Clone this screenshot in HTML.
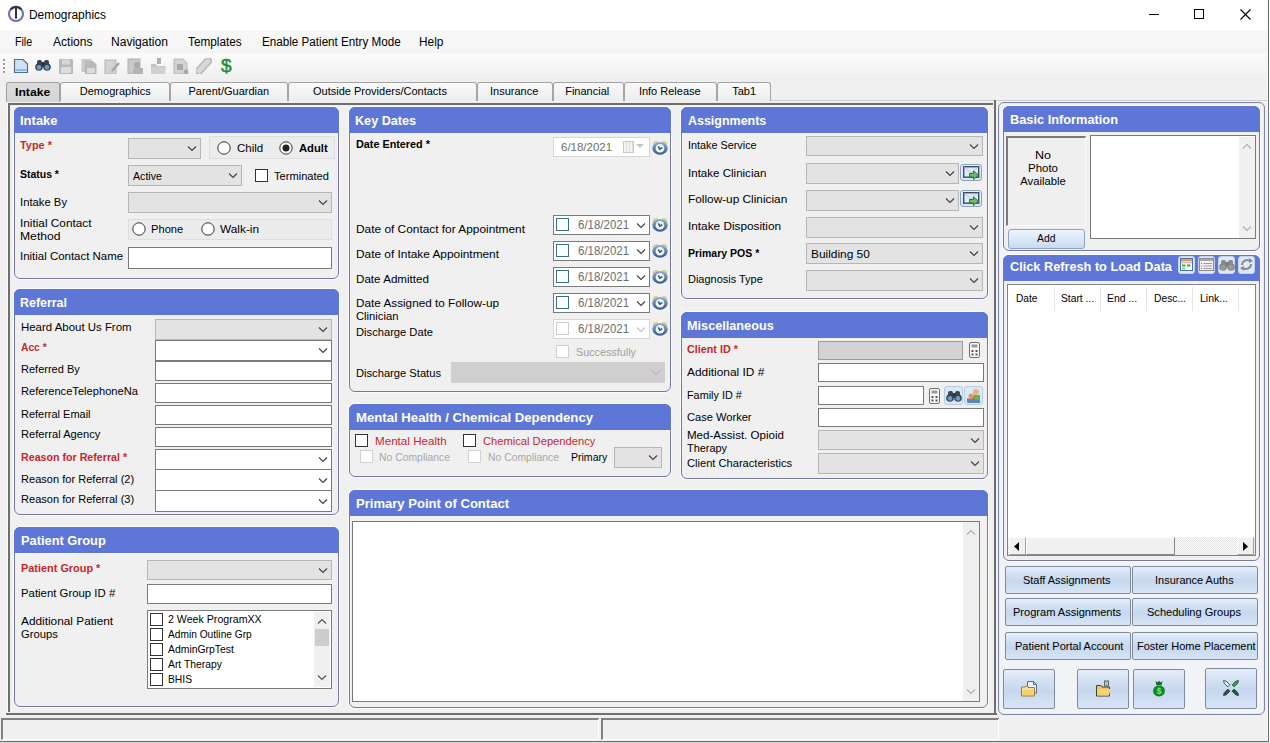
<!DOCTYPE html><html><head><meta charset="utf-8"><style>html,body{margin:0;padding:0;}body{width:1270px;height:743px;position:relative;overflow:hidden;background:#f0f0f0;font-family:"Liberation Sans", sans-serif;}div{box-sizing:content-box;}</style></head><body>
<div style="position:absolute;left:0px;top:0px;width:1270px;height:30px;background:#fff;"></div>
<svg style="position:absolute;left:7px;top:5px" width="18" height="18" viewBox="0 0 18 18"><circle cx="9" cy="9" r="7" fill="none" stroke="#6c6fc4" stroke-width="2.1"/><path d="M3.6,4.5 A7,7 0 0 1 14.4,4.5" fill="none" stroke="#2e3636" stroke-width="2.3"/><path d="M9,2.5 V13.5" stroke="#2e3636" stroke-width="2"/></svg>
<div style="position:absolute;left:29.0px;top:7.84px;font-size:12px;line-height:14px;color:#000;font-weight:normal;white-space:nowrap;transform:scaleX(0.9952);transform-origin:left top;">Demographics</div>
<div style="position:absolute;left:1149px;top:14px;width:10px;height:1px;background:#000;"></div>
<div style="position:absolute;left:1194px;top:9px;width:10px;height:10px;box-sizing:border-box;border:1px solid #000;"></div>
<svg style="position:absolute;left:1240px;top:9px" width="11" height="11"><path d="M0.5,0.5 L10.5,10.5 M10.5,0.5 L0.5,10.5" stroke="#000" stroke-width="1.1"/></svg>
<div style="position:absolute;left:1267px;top:0px;width:1px;height:743px;background:#f4f4f4;"></div>
<div style="position:absolute;left:1268px;top:0px;width:1px;height:743px;background:#6e6e6e;"></div>
<div style="position:absolute;left:1269px;top:0px;width:1px;height:743px;background:#fff;"></div>
<div style="position:absolute;left:0px;top:30px;width:1267px;height:23px;background:linear-gradient(#f8f8f8,#f5f5f5);"></div>
<div style="position:absolute;left:15.4px;top:34.84px;font-size:12px;line-height:14px;color:#000;font-weight:normal;white-space:nowrap;transform:scaleX(0.8877);transform-origin:left top;">File</div>
<div style="position:absolute;left:52.5px;top:34.84px;font-size:12px;line-height:14px;color:#000;font-weight:normal;white-space:nowrap;transform:scaleX(1.0032);transform-origin:left top;">Actions</div>
<div style="position:absolute;left:111.4px;top:34.84px;font-size:12px;line-height:14px;color:#000;font-weight:normal;white-space:nowrap;transform:scaleX(1.0044);transform-origin:left top;">Navigation</div>
<div style="position:absolute;left:188.3px;top:34.84px;font-size:12px;line-height:14px;color:#000;font-weight:normal;white-space:nowrap;transform:scaleX(0.9808);transform-origin:left top;">Templates</div>
<div style="position:absolute;left:261.5px;top:34.84px;font-size:12px;line-height:14px;color:#000;font-weight:normal;white-space:nowrap;transform:scaleX(0.9716);transform-origin:left top;">Enable Patient Entry Mode</div>
<div style="position:absolute;left:419.4px;top:34.84px;font-size:12px;line-height:14px;color:#000;font-weight:normal;white-space:nowrap;transform:scaleX(0.9868);transform-origin:left top;">Help</div>
<div style="position:absolute;left:0px;top:53px;width:1267px;height:29px;background:linear-gradient(#fbfbfb,#eeeeee);"></div>
<div style="position:absolute;left:3px;top:59px;width:2px;height:2px;background:#9a9a9a;"></div>
<div style="position:absolute;left:3px;top:63px;width:2px;height:2px;background:#9a9a9a;"></div>
<div style="position:absolute;left:3px;top:67px;width:2px;height:2px;background:#9a9a9a;"></div>
<div style="position:absolute;left:3px;top:71px;width:2px;height:2px;background:#9a9a9a;"></div>
<svg style="position:absolute;left:13px;top:58px" width="16" height="16" viewBox="0 0 16 16"><path d="M1.5,1.5 H10 L14.5,6 V14.5 H1.5 Z" fill="#cfe2f5" stroke="#5b6d80" stroke-width="1.2"/><rect x="2.2" y="11" width="11.6" height="2" fill="#7fc0ea"/></svg>
<svg style="position:absolute;left:35px;top:59px" width="16" height="12" viewBox="0 0 16 12"><rect x="2" y="1" width="5" height="6" rx="2" fill="#3a4450"/><rect x="9" y="1" width="5" height="6" rx="2" fill="#3a4450"/><rect x="5" y="3" width="6" height="5" fill="#3a4450"/><circle cx="4" cy="8" r="3.8" fill="#3a4450"/><circle cx="12" cy="8" r="3.8" fill="#3a4450"/><circle cx="4" cy="8.4" r="2.3" fill="#6f9cc6"/><circle cx="12" cy="8.4" r="2.3" fill="#6f9cc6"/><circle cx="8" cy="5" r="1" fill="#1d242c"/></svg>
<svg style="position:absolute;left:58px;top:58px" width="16" height="16" viewBox="0 0 16 16"><rect x="1" y="1" width="14" height="15" rx="1" fill="#b9b9b9"/><rect x="4" y="1.5" width="8" height="5" fill="#d6d6d6"/><rect x="3" y="9" width="10" height="6" fill="#dcdcdc"/></svg>
<svg style="position:absolute;left:81px;top:58px" width="16" height="16" viewBox="0 0 16 16"><rect x="0.5" y="1" width="10" height="13" fill="#c8c8c8"/><path d="M4,3 H12 L15.5,6.5 V16 H4 Z" fill="#b9b9b9"/><rect x="6" y="10" width="8" height="5" fill="#dcdcdc"/></svg>
<svg style="position:absolute;left:104px;top:58px" width="16" height="16" viewBox="0 0 16 16"><rect x="1" y="2" width="11" height="14" fill="#d2d2d2" stroke="#b4b4b4"/><path d="M8,13 L15,5" stroke="#a8a8a8" stroke-width="2.5"/></svg>
<svg style="position:absolute;left:127px;top:58px" width="16" height="16" viewBox="0 0 16 16"><rect x="1" y="1" width="12" height="15" fill="#c9c9c9" stroke="#b0b0b0"/><circle cx="10" cy="7" r="3" fill="#a9a9a9"/><rect x="6" y="10" width="10" height="6" fill="#b4b4b4"/></svg>
<svg style="position:absolute;left:150px;top:58px" width="16" height="16" viewBox="0 0 16 16"><rect x="7" y="0" width="4" height="6" fill="#b0b0b0"/><path d="M1,6 H6 L7,8 H15 V16 H1 Z" fill="#c4c4c4"/><path d="M1,9 H16 L15,16 H1 Z" fill="#d0d0d0"/></svg>
<svg style="position:absolute;left:173px;top:58px" width="16" height="16" viewBox="0 0 16 16"><path d="M1,1 H10 L14,5 V16 H1 Z" fill="#d4d4d4" stroke="#b8b8b8"/><rect x="4" y="6" width="6" height="6" fill="#a8a8a8"/><circle cx="13" cy="14" r="2.5" fill="#a8a8a8"/></svg>
<svg style="position:absolute;left:196px;top:58px" width="16" height="16" viewBox="0 0 16 16"><path d="M3,13 L12,3" stroke="#b8b8b8" stroke-width="8" stroke-linecap="round"/><path d="M3,13 L12,3" stroke="#d6d6d6" stroke-width="5" stroke-linecap="round"/></svg>
<div style="position:absolute;left:221px;top:55px;font-size:19px;line-height:22px;font-weight:normal;color:#238c3c;-webkit-text-stroke:0.5px #238c3c;">$</div>
<div style="position:absolute;left:6px;top:100px;width:1261px;height:1px;background:#cfcfcf;"></div>
<div style="position:absolute;left:60px;top:82px;width:108px;height:18px;border:1px solid #a4a4a4;border-bottom:none;border-radius:3px 3px 0 0;background:linear-gradient(#fafafa,#ececec);"></div>
<div style="position:absolute;left:79.8px;top:84.69px;font-size:11px;line-height:13px;color:#000;font-weight:normal;white-space:nowrap;">Demographics</div>
<div style="position:absolute;left:170px;top:82px;width:116px;height:18px;border:1px solid #a4a4a4;border-bottom:none;border-radius:3px 3px 0 0;background:linear-gradient(#fafafa,#ececec);"></div>
<div style="position:absolute;left:188.5px;top:84.69px;font-size:11px;line-height:13px;color:#000;font-weight:normal;white-space:nowrap;">Parent/Guardian</div>
<div style="position:absolute;left:288px;top:82px;width:187px;height:18px;border:1px solid #a4a4a4;border-bottom:none;border-radius:3px 3px 0 0;background:linear-gradient(#fafafa,#ececec);"></div>
<div style="position:absolute;left:313px;top:84.69px;font-size:11px;line-height:13px;color:#000;font-weight:normal;white-space:nowrap;">Outside Providers/Contacts</div>
<div style="position:absolute;left:477px;top:82px;width:74px;height:18px;border:1px solid #a4a4a4;border-bottom:none;border-radius:3px 3px 0 0;background:linear-gradient(#fafafa,#ececec);"></div>
<div style="position:absolute;left:490px;top:84.69px;font-size:11px;line-height:13px;color:#000;font-weight:normal;white-space:nowrap;">Insurance</div>
<div style="position:absolute;left:553px;top:82px;width:69px;height:18px;border:1px solid #a4a4a4;border-bottom:none;border-radius:3px 3px 0 0;background:linear-gradient(#fafafa,#ececec);"></div>
<div style="position:absolute;left:565.2px;top:84.69px;font-size:11px;line-height:13px;color:#000;font-weight:normal;white-space:nowrap;">Financial</div>
<div style="position:absolute;left:624px;top:82px;width:91px;height:18px;border:1px solid #a4a4a4;border-bottom:none;border-radius:3px 3px 0 0;background:linear-gradient(#fafafa,#ececec);"></div>
<div style="position:absolute;left:638.9px;top:84.69px;font-size:11px;line-height:13px;color:#000;font-weight:normal;white-space:nowrap;">Info Release</div>
<div style="position:absolute;left:717px;top:82px;width:52px;height:18px;border:1px solid #a4a4a4;border-bottom:none;border-radius:3px 3px 0 0;background:linear-gradient(#fafafa,#ececec);"></div>
<div style="position:absolute;left:732.2px;top:84.69px;font-size:11px;line-height:13px;color:#000;font-weight:normal;white-space:nowrap;">Tab1</div>
<div style="position:absolute;left:6px;top:82px;width:52px;height:19px;border:1px solid #a0a0a0;border-bottom:none;border-radius:3px 3px 0 0;background:linear-gradient(#dcdcdc,#d4d4d4);"></div>
<div style="position:absolute;left:14.8px;top:85.02px;font-size:11.5px;line-height:14px;color:#000;font-weight:bold;white-space:nowrap;transform:scaleX(1.0608);transform-origin:left top;">Intake</div>
<div style="position:absolute;left:8px;top:103px;width:985px;height:609px;box-sizing:border-box;border-top:2px solid #6e6e6e;border-left:2px solid #6e6e6e;background:#f0f0f0;"></div>
<div style="position:absolute;left:7px;top:103px;width:1px;height:610px;background:#fff;"></div>
<div style="position:absolute;left:6px;top:713px;width:991px;height:2px;background:#6e6e6e;"></div>
<div style="position:absolute;left:994px;top:100px;width:2px;height:615px;background:#6e6e6e;"></div>
<div style="position:absolute;left:14px;top:107px;width:323px;height:170px;border:1px solid #7378a8;border-radius:6px;background:#f0f0f1;box-shadow:0 0 0 1px #fbfbff;"></div>
<div style="position:absolute;left:14px;top:107px;width:325px;height:26px;background:#5e77d6;border-radius:6px 6px 0 0;"></div>
<div style="position:absolute;left:20.4px;top:112.50px;font-size:13px;line-height:16px;color:#fff;font-weight:bold;white-space:nowrap;transform:scaleX(0.9997);transform-origin:left top;">Intake</div>
<div style="position:absolute;left:20.2px;top:138.69px;font-size:11px;line-height:13px;color:#c62828;font-weight:bold;white-space:nowrap;transform:scaleX(0.9903);transform-origin:left top;">Type *</div>
<div style="position:absolute;left:20.2px;top:167.69px;font-size:11px;line-height:13px;color:#000;font-weight:bold;white-space:nowrap;transform:scaleX(0.9507);transform-origin:left top;">Status *</div>
<div style="position:absolute;left:20.2px;top:195.69px;font-size:11px;line-height:13px;color:#000;font-weight:normal;white-space:nowrap;transform:scaleX(1.0255);transform-origin:left top;">Intake By</div>
<div style="position:absolute;left:20.2px;top:216.69px;font-size:11px;line-height:13px;color:#000;font-weight:normal;white-space:nowrap;transform:scaleX(1.0722);transform-origin:left top;">Initial Contact</div>
<div style="position:absolute;left:20.2px;top:229.69px;font-size:11px;line-height:13px;color:#000;font-weight:normal;white-space:nowrap;transform:scaleX(1.1045);transform-origin:left top;">Method</div>
<div style="position:absolute;left:20.2px;top:249.69px;font-size:11px;line-height:13px;color:#000;font-weight:normal;white-space:nowrap;transform:scaleX(1.0404);transform-origin:left top;">Initial Contact Name</div>
<div style="position:absolute;left:128px;top:138px;width:73px;height:21px;box-sizing:border-box;background:#e3e3e3;border:1px solid #b6b6b6;"></div>
<svg style="position:absolute;left:187.0px;top:145.0px" width="10" height="7"><polyline points="1,1.5 5.0,5.5 9,1.5" fill="none" stroke="#404040" stroke-width="1.1"/></svg>
<div style="position:absolute;left:209px;top:136px;width:126px;height:23px;box-sizing:border-box;border:1px solid #dedede;background:#ececec;"></div>
<svg style="position:absolute;left:216.5px;top:141px" width="14" height="14"><circle cx="7" cy="7" r="6.2" fill="#fff" stroke="#333" stroke-width="1"/></svg>
<div style="position:absolute;left:236.6px;top:141.69px;font-size:11px;line-height:13px;color:#000;font-weight:normal;white-space:nowrap;transform:scaleX(1.0481);transform-origin:left top;">Child</div>
<svg style="position:absolute;left:278.5px;top:141px" width="14" height="14"><circle cx="7" cy="7" r="6.2" fill="#fff" stroke="#333" stroke-width="1"/><circle cx="7" cy="7" r="3.5" fill="#222"/></svg>
<div style="position:absolute;left:298.6px;top:141.69px;font-size:11px;line-height:13px;color:#000;font-weight:bold;white-space:nowrap;transform:scaleX(1.0223);transform-origin:left top;">Adult</div>
<div style="position:absolute;left:128px;top:165px;width:114px;height:21px;box-sizing:border-box;background:#e3e3e3;border:1px solid #b6b6b6;"></div>
<svg style="position:absolute;left:228.0px;top:172.0px" width="10" height="7"><polyline points="1,1.5 5.0,5.5 9,1.5" fill="none" stroke="#404040" stroke-width="1.1"/></svg>
<div style="position:absolute;left:132.5px;top:169.69px;font-size:11px;line-height:13px;color:#000;font-weight:normal;white-space:nowrap;transform:scaleX(0.9664);transform-origin:left top;">Active</div>
<div style="position:absolute;left:255px;top:169px;width:13px;height:13px;box-sizing:border-box;background:#fff;border:1px solid #333;"></div>
<div style="position:absolute;left:274.4px;top:169.69px;font-size:11px;line-height:13px;color:#000;font-weight:normal;white-space:nowrap;transform:scaleX(1.0105);transform-origin:left top;">Terminated</div>
<div style="position:absolute;left:128px;top:192px;width:204px;height:21px;box-sizing:border-box;background:#e3e3e3;border:1px solid #b6b6b6;"></div>
<svg style="position:absolute;left:318.0px;top:199.0px" width="10" height="7"><polyline points="1,1.5 5.0,5.5 9,1.5" fill="none" stroke="#404040" stroke-width="1.1"/></svg>
<div style="position:absolute;left:128px;top:219px;width:204px;height:21px;box-sizing:border-box;border:1px solid #dedede;background:#ececec;"></div>
<svg style="position:absolute;left:132px;top:222px" width="14" height="14"><circle cx="7" cy="7" r="6.2" fill="#fff" stroke="#333" stroke-width="1"/></svg>
<div style="position:absolute;left:151.3px;top:222.69px;font-size:11px;line-height:13px;color:#000;font-weight:normal;white-space:nowrap;transform:scaleX(1.0140);transform-origin:left top;">Phone</div>
<svg style="position:absolute;left:200.5px;top:222px" width="14" height="14"><circle cx="7" cy="7" r="6.2" fill="#fff" stroke="#333" stroke-width="1"/></svg>
<div style="position:absolute;left:220.3px;top:222.69px;font-size:11px;line-height:13px;color:#000;font-weight:normal;white-space:nowrap;transform:scaleX(1.0771);transform-origin:left top;">Walk-in</div>
<div style="position:absolute;left:128px;top:247px;width:204px;height:22px;box-sizing:border-box;background:#fff;border:1px solid #7a7a7a;"></div>
<div style="position:absolute;left:14px;top:289px;width:323px;height:224px;border:1px solid #7378a8;border-radius:6px;background:#f0f0f1;box-shadow:0 0 0 1px #fbfbff;"></div>
<div style="position:absolute;left:14px;top:289px;width:325px;height:26px;background:#5e77d6;border-radius:6px 6px 0 0;"></div>
<div style="position:absolute;left:20.3px;top:294.50px;font-size:13px;line-height:16px;color:#fff;font-weight:bold;white-space:nowrap;transform:scaleX(0.9561);transform-origin:left top;">Referral</div>
<div style="position:absolute;left:20.5px;top:320.69px;font-size:11px;line-height:13px;color:#000;font-weight:normal;white-space:nowrap;transform:scaleX(1.0392);transform-origin:left top;">Heard About Us From</div>
<div style="position:absolute;left:20.5px;top:340.69px;font-size:11px;line-height:13px;color:#c62828;font-weight:bold;white-space:nowrap;transform:scaleX(0.9307);transform-origin:left top;">Acc *</div>
<div style="position:absolute;left:20.5px;top:363.19px;font-size:11px;line-height:13px;color:#000;font-weight:normal;white-space:nowrap;transform:scaleX(1.0006);transform-origin:left top;">Referred By</div>
<div style="position:absolute;left:20.5px;top:384.69px;font-size:11px;line-height:13px;color:#000;font-weight:normal;white-space:nowrap;transform:scaleX(1.0120);transform-origin:left top;">ReferenceTelephoneNa</div>
<div style="position:absolute;left:20.5px;top:407.69px;font-size:11px;line-height:13px;color:#000;font-weight:normal;white-space:nowrap;transform:scaleX(0.9976);transform-origin:left top;">Referral Email</div>
<div style="position:absolute;left:20.5px;top:428.19px;font-size:11px;line-height:13px;color:#000;font-weight:normal;white-space:nowrap;transform:scaleX(1.0133);transform-origin:left top;">Referral Agency</div>
<div style="position:absolute;left:20.5px;top:450.69px;font-size:11px;line-height:13px;color:#c62828;font-weight:bold;white-space:nowrap;transform:scaleX(0.9695);transform-origin:left top;">Reason for Referral *</div>
<div style="position:absolute;left:20.5px;top:472.69px;font-size:11px;line-height:13px;color:#000;font-weight:normal;white-space:nowrap;transform:scaleX(1.0060);transform-origin:left top;">Reason for Referral (2)</div>
<div style="position:absolute;left:20.5px;top:493.19px;font-size:11px;line-height:13px;color:#000;font-weight:normal;white-space:nowrap;transform:scaleX(1.0060);transform-origin:left top;">Reason for Referral (3)</div>
<div style="position:absolute;left:155px;top:319px;width:177px;height:21px;box-sizing:border-box;background:#e3e3e3;border:1px solid #b6b6b6;"></div>
<svg style="position:absolute;left:318.0px;top:326.0px" width="10" height="7"><polyline points="1,1.5 5.0,5.5 9,1.5" fill="none" stroke="#404040" stroke-width="1.1"/></svg>
<div style="position:absolute;left:155px;top:340px;width:177px;height:21px;box-sizing:border-box;background:#fff;border:1px solid #7a7a7a;"></div>
<svg style="position:absolute;left:318.0px;top:347.0px" width="10" height="7"><polyline points="1,1.5 5.0,5.5 9,1.5" fill="none" stroke="#404040" stroke-width="1.1"/></svg>
<div style="position:absolute;left:155px;top:361px;width:177px;height:20px;box-sizing:border-box;background:#fff;border:1px solid #7a7a7a;"></div>
<div style="position:absolute;left:155px;top:383px;width:177px;height:20px;box-sizing:border-box;background:#fff;border:1px solid #7a7a7a;"></div>
<div style="position:absolute;left:155px;top:405px;width:177px;height:20px;box-sizing:border-box;background:#fff;border:1px solid #7a7a7a;"></div>
<div style="position:absolute;left:155px;top:427px;width:177px;height:20px;box-sizing:border-box;background:#fff;border:1px solid #7a7a7a;"></div>
<div style="position:absolute;left:155px;top:449px;width:177px;height:21px;box-sizing:border-box;background:#fff;border:1px solid #7a7a7a;"></div>
<svg style="position:absolute;left:318.0px;top:456.0px" width="10" height="7"><polyline points="1,1.5 5.0,5.5 9,1.5" fill="none" stroke="#404040" stroke-width="1.1"/></svg>
<div style="position:absolute;left:155px;top:469px;width:177px;height:22px;box-sizing:border-box;background:#fff;border:1px solid #7a7a7a;"></div>
<svg style="position:absolute;left:318.0px;top:476.5px" width="10" height="7"><polyline points="1,1.5 5.0,5.5 9,1.5" fill="none" stroke="#404040" stroke-width="1.1"/></svg>
<div style="position:absolute;left:155px;top:490px;width:177px;height:22px;box-sizing:border-box;background:#fff;border:1px solid #7a7a7a;"></div>
<svg style="position:absolute;left:318.0px;top:497.5px" width="10" height="7"><polyline points="1,1.5 5.0,5.5 9,1.5" fill="none" stroke="#404040" stroke-width="1.1"/></svg>
<div style="position:absolute;left:14px;top:527px;width:323px;height:178px;border:1px solid #7378a8;border-radius:6px;background:#f0f0f1;box-shadow:0 0 0 1px #fbfbff;"></div>
<div style="position:absolute;left:14px;top:527px;width:325px;height:26px;background:#5e77d6;border-radius:6px 6px 0 0;"></div>
<div style="position:absolute;left:20.8px;top:532.50px;font-size:13px;line-height:16px;color:#fff;font-weight:bold;white-space:nowrap;transform:scaleX(0.9862);transform-origin:left top;">Patient Group</div>
<div style="position:absolute;left:20.8px;top:562.19px;font-size:11px;line-height:13px;color:#c62828;font-weight:bold;white-space:nowrap;transform:scaleX(0.9913);transform-origin:left top;">Patient Group *</div>
<div style="position:absolute;left:20.8px;top:587.19px;font-size:11px;line-height:13px;color:#000;font-weight:normal;white-space:nowrap;transform:scaleX(1.0341);transform-origin:left top;">Patient Group ID #</div>
<div style="position:absolute;left:20.8px;top:614.69px;font-size:11px;line-height:13px;color:#000;font-weight:normal;white-space:nowrap;transform:scaleX(1.0760);transform-origin:left top;">Additional Patient</div>
<div style="position:absolute;left:20.8px;top:627.69px;font-size:11px;line-height:13px;color:#000;font-weight:normal;white-space:nowrap;transform:scaleX(1.0223);transform-origin:left top;">Groups</div>
<div style="position:absolute;left:147px;top:560px;width:185px;height:20px;box-sizing:border-box;background:#e3e3e3;border:1px solid #b6b6b6;"></div>
<svg style="position:absolute;left:318.0px;top:566.5px" width="10" height="7"><polyline points="1,1.5 5.0,5.5 9,1.5" fill="none" stroke="#404040" stroke-width="1.1"/></svg>
<div style="position:absolute;left:147px;top:584px;width:185px;height:20px;box-sizing:border-box;background:#fff;border:1px solid #7a7a7a;"></div>
<div style="position:absolute;left:147px;top:610px;width:185px;height:79px;box-sizing:border-box;background:#fff;border:1px solid #7a7a7a;"></div>
<div style="position:absolute;left:150px;top:613px;width:13px;height:13px;box-sizing:border-box;background:#fff;border:1px solid #333;"></div>
<div style="position:absolute;left:168.3px;top:612.69px;font-size:11px;line-height:13px;color:#000;font-weight:normal;white-space:nowrap;transform:scaleX(0.9655);transform-origin:left top;">2 Week ProgramXX</div>
<div style="position:absolute;left:150px;top:628px;width:13px;height:13px;box-sizing:border-box;background:#fff;border:1px solid #333;"></div>
<div style="position:absolute;left:168.3px;top:627.69px;font-size:11px;line-height:13px;color:#000;font-weight:normal;white-space:nowrap;transform:scaleX(0.9258);transform-origin:left top;">Admin Outline Grp</div>
<div style="position:absolute;left:150px;top:643px;width:13px;height:13px;box-sizing:border-box;background:#fff;border:1px solid #333;"></div>
<div style="position:absolute;left:168.3px;top:642.69px;font-size:11px;line-height:13px;color:#000;font-weight:normal;white-space:nowrap;transform:scaleX(0.9459);transform-origin:left top;">AdminGrpTest</div>
<div style="position:absolute;left:150px;top:658px;width:13px;height:13px;box-sizing:border-box;background:#fff;border:1px solid #333;"></div>
<div style="position:absolute;left:168.3px;top:657.69px;font-size:11px;line-height:13px;color:#000;font-weight:normal;white-space:nowrap;transform:scaleX(0.9408);transform-origin:left top;">Art Therapy</div>
<div style="position:absolute;left:150px;top:673px;width:13px;height:13px;box-sizing:border-box;background:#fff;border:1px solid #333;"></div>
<div style="position:absolute;left:168.3px;top:672.69px;font-size:11px;line-height:13px;color:#000;font-weight:normal;white-space:nowrap;transform:scaleX(0.9351);transform-origin:left top;">BHIS</div>
<div style="position:absolute;left:314px;top:612px;width:16px;height:75px;background:#f0f0f0;"></div>
<div style="position:absolute;left:315px;top:629px;width:14px;height:17px;background:#cdcdcd;"></div>
<svg style="position:absolute;left:317px;top:618px" width="10" height="7"><polyline points="1,5.5 5,1.5 9,5.5" fill="none" stroke="#555" stroke-width="1.2"/></svg>
<svg style="position:absolute;left:317px;top:674px" width="10" height="7"><polyline points="1,1.5 5,5.5 9,1.5" fill="none" stroke="#555" stroke-width="1.2"/></svg>
<div style="position:absolute;left:349px;top:107px;width:320px;height:283px;border:1px solid #7378a8;border-radius:6px;background:#f0f0f1;box-shadow:0 0 0 1px #fbfbff;"></div>
<div style="position:absolute;left:349px;top:107px;width:322px;height:26px;background:#5e77d6;border-radius:6px 6px 0 0;"></div>
<div style="position:absolute;left:355.3px;top:112.50px;font-size:13px;line-height:16px;color:#fff;font-weight:bold;white-space:nowrap;transform:scaleX(0.9708);transform-origin:left top;">Key Dates</div>
<div style="position:absolute;left:355.7px;top:138.39px;font-size:11px;line-height:13px;color:#000;font-weight:bold;white-space:nowrap;transform:scaleX(0.9830);transform-origin:left top;">Date Entered *</div>
<div style="position:absolute;left:553px;top:137px;width:97px;height:20px;box-sizing:border-box;background:#fff;border:1px solid #d6d6d6;"></div>
<div style="position:absolute;left:561.0px;top:141.19px;font-size:11px;line-height:13px;color:#6d6d6d;font-weight:normal;white-space:nowrap;transform:scaleX(1.0424);transform-origin:left top;">6/18/2021</div>
<div style="position:absolute;left:623px;top:141px;width:11px;height:12px;box-sizing:border-box;border:1px solid #c8c8c8;background:repeating-linear-gradient(90deg,#f4f4f4 0 2px,#dedede 2px 3px);"></div>
<svg style="position:absolute;left:636px;top:144px" width="8" height="5"><polygon points="0,0 8,0 4,4" fill="#c4c4c4"/></svg>
<svg style="position:absolute;left:652px;top:140px" width="16" height="15" viewBox="0 0 16 15"><defs><linearGradient id="cg1" x1="0" y1="0" x2="0" y2="1"><stop offset="0" stop-color="#8cb0d6"/><stop offset="1" stop-color="#365a8a"/></linearGradient></defs><ellipse cx="3.3" cy="3.2" rx="3" ry="2" transform="rotate(-35 3.3 3.2)" fill="#d9d48c"/><ellipse cx="12.7" cy="3.2" rx="3" ry="2" transform="rotate(35 12.7 3.2)" fill="#d9d48c"/><ellipse cx="8" cy="8.3" rx="7.6" ry="6.4" fill="url(#cg1)"/><circle cx="8" cy="8.2" r="4.3" fill="#eaf5fc"/><path d="M6.3,6.3 L7.8,9.2 L10.3,7.6" fill="none" stroke="#4a4e58" stroke-width="1.5"/></svg>
<div style="position:absolute;left:355.6px;top:222.69px;font-size:11px;line-height:13px;color:#000;font-weight:normal;white-space:nowrap;transform:scaleX(1.0797);transform-origin:left top;">Date of Contact for Appointment</div>
<div style="position:absolute;left:355.6px;top:247.69px;font-size:11px;line-height:13px;color:#000;font-weight:normal;white-space:nowrap;transform:scaleX(1.0777);transform-origin:left top;">Date of Intake Appointment</div>
<div style="position:absolute;left:355.6px;top:272.69px;font-size:11px;line-height:13px;color:#000;font-weight:normal;white-space:nowrap;transform:scaleX(1.0565);transform-origin:left top;">Date Admitted</div>
<div style="position:absolute;left:355.6px;top:297.19px;font-size:11px;line-height:13px;color:#000;font-weight:normal;white-space:nowrap;transform:scaleX(1.0676);transform-origin:left top;">Date Assigned to Follow-up</div>
<div style="position:absolute;left:355.6px;top:310.19px;font-size:11px;line-height:13px;color:#000;font-weight:normal;white-space:nowrap;transform:scaleX(1.0218);transform-origin:left top;">Clinician</div>
<div style="position:absolute;left:355.6px;top:325.69px;font-size:11px;line-height:13px;color:#000;font-weight:normal;white-space:nowrap;transform:scaleX(1.0151);transform-origin:left top;">Discharge Date</div>
<div style="position:absolute;left:355.6px;top:366.69px;font-size:11px;line-height:13px;color:#000;font-weight:normal;white-space:nowrap;transform:scaleX(1.0148);transform-origin:left top;">Discharge Status</div>
<div style="position:absolute;left:553px;top:215px;width:97px;height:20px;box-sizing:border-box;background:#fff;border:1px solid #7a7a7a;"></div>
<div style="position:absolute;left:556px;top:218px;width:13px;height:13px;box-sizing:border-box;background:#fafdff;border:1px solid #3d6f7a;"></div>
<div style="position:absolute;left:578.3px;top:218.14px;font-size:12px;line-height:14px;color:#6d6d6d;font-weight:normal;white-space:nowrap;transform:scaleX(0.9555);transform-origin:left top;">6/18/2021</div>
<svg style="position:absolute;left:636.0px;top:222px" width="10" height="7"><polyline points="1,1.5 5.0,5.5 9,1.5" fill="none" stroke="#404040" stroke-width="1.1"/></svg>
<svg style="position:absolute;left:652px;top:217px" width="16" height="15" viewBox="0 0 16 15"><defs><linearGradient id="cg2" x1="0" y1="0" x2="0" y2="1"><stop offset="0" stop-color="#8cb0d6"/><stop offset="1" stop-color="#365a8a"/></linearGradient></defs><ellipse cx="3.3" cy="3.2" rx="3" ry="2" transform="rotate(-35 3.3 3.2)" fill="#d9d48c"/><ellipse cx="12.7" cy="3.2" rx="3" ry="2" transform="rotate(35 12.7 3.2)" fill="#d9d48c"/><ellipse cx="8" cy="8.3" rx="7.6" ry="6.4" fill="url(#cg2)"/><circle cx="8" cy="8.2" r="4.3" fill="#eaf5fc"/><path d="M6.3,6.3 L7.8,9.2 L10.3,7.6" fill="none" stroke="#4a4e58" stroke-width="1.5"/></svg>
<div style="position:absolute;left:553px;top:241px;width:97px;height:20px;box-sizing:border-box;background:#fff;border:1px solid #7a7a7a;"></div>
<div style="position:absolute;left:556px;top:244px;width:13px;height:13px;box-sizing:border-box;background:#fafdff;border:1px solid #3d6f7a;"></div>
<div style="position:absolute;left:578.3px;top:244.14px;font-size:12px;line-height:14px;color:#6d6d6d;font-weight:normal;white-space:nowrap;transform:scaleX(0.9555);transform-origin:left top;">6/18/2021</div>
<svg style="position:absolute;left:636.0px;top:248px" width="10" height="7"><polyline points="1,1.5 5.0,5.5 9,1.5" fill="none" stroke="#404040" stroke-width="1.1"/></svg>
<svg style="position:absolute;left:652px;top:243px" width="16" height="15" viewBox="0 0 16 15"><defs><linearGradient id="cg3" x1="0" y1="0" x2="0" y2="1"><stop offset="0" stop-color="#8cb0d6"/><stop offset="1" stop-color="#365a8a"/></linearGradient></defs><ellipse cx="3.3" cy="3.2" rx="3" ry="2" transform="rotate(-35 3.3 3.2)" fill="#d9d48c"/><ellipse cx="12.7" cy="3.2" rx="3" ry="2" transform="rotate(35 12.7 3.2)" fill="#d9d48c"/><ellipse cx="8" cy="8.3" rx="7.6" ry="6.4" fill="url(#cg3)"/><circle cx="8" cy="8.2" r="4.3" fill="#eaf5fc"/><path d="M6.3,6.3 L7.8,9.2 L10.3,7.6" fill="none" stroke="#4a4e58" stroke-width="1.5"/></svg>
<div style="position:absolute;left:553px;top:267px;width:97px;height:20px;box-sizing:border-box;background:#fff;border:1px solid #7a7a7a;"></div>
<div style="position:absolute;left:556px;top:270px;width:13px;height:13px;box-sizing:border-box;background:#fafdff;border:1px solid #3d6f7a;"></div>
<div style="position:absolute;left:578.3px;top:270.14px;font-size:12px;line-height:14px;color:#6d6d6d;font-weight:normal;white-space:nowrap;transform:scaleX(0.9555);transform-origin:left top;">6/18/2021</div>
<svg style="position:absolute;left:636.0px;top:274px" width="10" height="7"><polyline points="1,1.5 5.0,5.5 9,1.5" fill="none" stroke="#404040" stroke-width="1.1"/></svg>
<svg style="position:absolute;left:652px;top:269px" width="16" height="15" viewBox="0 0 16 15"><defs><linearGradient id="cg4" x1="0" y1="0" x2="0" y2="1"><stop offset="0" stop-color="#8cb0d6"/><stop offset="1" stop-color="#365a8a"/></linearGradient></defs><ellipse cx="3.3" cy="3.2" rx="3" ry="2" transform="rotate(-35 3.3 3.2)" fill="#d9d48c"/><ellipse cx="12.7" cy="3.2" rx="3" ry="2" transform="rotate(35 12.7 3.2)" fill="#d9d48c"/><ellipse cx="8" cy="8.3" rx="7.6" ry="6.4" fill="url(#cg4)"/><circle cx="8" cy="8.2" r="4.3" fill="#eaf5fc"/><path d="M6.3,6.3 L7.8,9.2 L10.3,7.6" fill="none" stroke="#4a4e58" stroke-width="1.5"/></svg>
<div style="position:absolute;left:553px;top:293px;width:97px;height:20px;box-sizing:border-box;background:#fff;border:1px solid #7a7a7a;"></div>
<div style="position:absolute;left:556px;top:296px;width:13px;height:13px;box-sizing:border-box;background:#fafdff;border:1px solid #3d6f7a;"></div>
<div style="position:absolute;left:578.3px;top:296.14px;font-size:12px;line-height:14px;color:#6d6d6d;font-weight:normal;white-space:nowrap;transform:scaleX(0.9555);transform-origin:left top;">6/18/2021</div>
<svg style="position:absolute;left:636.0px;top:300px" width="10" height="7"><polyline points="1,1.5 5.0,5.5 9,1.5" fill="none" stroke="#404040" stroke-width="1.1"/></svg>
<svg style="position:absolute;left:652px;top:295px" width="16" height="15" viewBox="0 0 16 15"><defs><linearGradient id="cg5" x1="0" y1="0" x2="0" y2="1"><stop offset="0" stop-color="#8cb0d6"/><stop offset="1" stop-color="#365a8a"/></linearGradient></defs><ellipse cx="3.3" cy="3.2" rx="3" ry="2" transform="rotate(-35 3.3 3.2)" fill="#d9d48c"/><ellipse cx="12.7" cy="3.2" rx="3" ry="2" transform="rotate(35 12.7 3.2)" fill="#d9d48c"/><ellipse cx="8" cy="8.3" rx="7.6" ry="6.4" fill="url(#cg5)"/><circle cx="8" cy="8.2" r="4.3" fill="#eaf5fc"/><path d="M6.3,6.3 L7.8,9.2 L10.3,7.6" fill="none" stroke="#4a4e58" stroke-width="1.5"/></svg>
<div style="position:absolute;left:553px;top:319px;width:97px;height:20px;box-sizing:border-box;background:#fff;border:1px solid #d6d6d6;"></div>
<div style="position:absolute;left:556px;top:322px;width:13px;height:13px;box-sizing:border-box;background:#fff;border:1px solid #cfcfcf;"></div>
<div style="position:absolute;left:578.3px;top:322.14px;font-size:12px;line-height:14px;color:#6d6d6d;font-weight:normal;white-space:nowrap;transform:scaleX(0.9555);transform-origin:left top;">6/18/2021</div>
<svg style="position:absolute;left:636.0px;top:326px" width="10" height="7"><polyline points="1,1.5 5.0,5.5 9,1.5" fill="none" stroke="#c0c0c0" stroke-width="1.1"/></svg>
<svg style="position:absolute;left:652px;top:321px" width="16" height="15" viewBox="0 0 16 15"><defs><linearGradient id="cg6" x1="0" y1="0" x2="0" y2="1"><stop offset="0" stop-color="#8cb0d6"/><stop offset="1" stop-color="#365a8a"/></linearGradient></defs><ellipse cx="3.3" cy="3.2" rx="3" ry="2" transform="rotate(-35 3.3 3.2)" fill="#d9d48c"/><ellipse cx="12.7" cy="3.2" rx="3" ry="2" transform="rotate(35 12.7 3.2)" fill="#d9d48c"/><ellipse cx="8" cy="8.3" rx="7.6" ry="6.4" fill="url(#cg6)"/><circle cx="8" cy="8.2" r="4.3" fill="#eaf5fc"/><path d="M6.3,6.3 L7.8,9.2 L10.3,7.6" fill="none" stroke="#4a4e58" stroke-width="1.5"/></svg>
<div style="position:absolute;left:556px;top:345px;width:13px;height:13px;box-sizing:border-box;background:#fff;border:1px solid #d0d0d0;"></div>
<div style="position:absolute;left:575.7px;top:345.69px;font-size:11px;line-height:13px;color:#a0a0a0;font-weight:normal;white-space:nowrap;transform:scaleX(0.9806);transform-origin:left top;">Successfully</div>
<div style="position:absolute;left:451px;top:362px;width:214px;height:21px;box-sizing:border-box;background:#cfcfcf;border:1px solid #cfcfcf;"></div>
<svg style="position:absolute;left:651.0px;top:369.0px" width="10" height="7"><polyline points="1,1.5 5.0,5.5 9,1.5" fill="none" stroke="#b8b8b8" stroke-width="1.1"/></svg>
<div style="position:absolute;left:349px;top:404px;width:320px;height:71px;border:1px solid #7378a8;border-radius:6px;background:#f0f0f1;box-shadow:0 0 0 1px #fbfbff;"></div>
<div style="position:absolute;left:349px;top:404px;width:322px;height:26px;background:#5e77d6;border-radius:6px 6px 0 0;"></div>
<div style="position:absolute;left:355.7px;top:409.50px;font-size:13px;line-height:16px;color:#fff;font-weight:bold;white-space:nowrap;transform:scaleX(1.0128);transform-origin:left top;">Mental Health / Chemical Dependency</div>
<div style="position:absolute;left:355px;top:434px;width:13px;height:13px;box-sizing:border-box;background:#fff;border:1px solid #333;"></div>
<div style="position:absolute;left:374.6px;top:435.19px;font-size:11px;line-height:13px;color:#c62828;font-weight:normal;white-space:nowrap;transform:scaleX(1.0570);transform-origin:left top;">Mental Health</div>
<div style="position:absolute;left:463px;top:434px;width:13px;height:13px;box-sizing:border-box;background:#fff;border:1px solid #333;"></div>
<div style="position:absolute;left:482.5px;top:435.19px;font-size:11px;line-height:13px;color:#c62828;font-weight:normal;white-space:nowrap;transform:scaleX(1.0146);transform-origin:left top;">Chemical Dependency</div>
<div style="position:absolute;left:360px;top:450px;width:13px;height:13px;box-sizing:border-box;background:#fff;border:1px solid #d2d2d2;"></div>
<div style="position:absolute;left:379.4px;top:450.69px;font-size:11px;line-height:13px;color:#a8a8a8;font-weight:normal;white-space:nowrap;transform:scaleX(0.9446);transform-origin:left top;">No Compliance</div>
<div style="position:absolute;left:468px;top:450px;width:13px;height:13px;box-sizing:border-box;background:#fff;border:1px solid #d2d2d2;"></div>
<div style="position:absolute;left:487.6px;top:450.69px;font-size:11px;line-height:13px;color:#a8a8a8;font-weight:normal;white-space:nowrap;transform:scaleX(0.9446);transform-origin:left top;">No Compliance</div>
<div style="position:absolute;left:570.6px;top:450.69px;font-size:11px;line-height:13px;color:#000;font-weight:normal;white-space:nowrap;transform:scaleX(0.9571);transform-origin:left top;">Primary</div>
<div style="position:absolute;left:614px;top:447px;width:48px;height:21px;box-sizing:border-box;background:#e3e3e3;border:1px solid #b6b6b6;"></div>
<svg style="position:absolute;left:648.0px;top:454.0px" width="10" height="7"><polyline points="1,1.5 5.0,5.5 9,1.5" fill="none" stroke="#404040" stroke-width="1.1"/></svg>
<div style="position:absolute;left:349px;top:490px;width:637px;height:216px;border:1px solid #7378a8;border-radius:6px;background:#f0f0f1;box-shadow:0 0 0 1px #fbfbff;"></div>
<div style="position:absolute;left:349px;top:490px;width:639px;height:26px;background:#5e77d6;border-radius:6px 6px 0 0;"></div>
<div style="position:absolute;left:355.6px;top:495.50px;font-size:13px;line-height:16px;color:#fff;font-weight:bold;white-space:nowrap;transform:scaleX(1.0043);transform-origin:left top;">Primary Point of Contact</div>
<div style="position:absolute;left:352px;top:521px;width:628px;height:181px;box-sizing:border-box;background:#fff;border:1px solid #7a7a7a;"></div>
<div style="position:absolute;left:963px;top:522px;width:16px;height:179px;background:#f0f0f0;"></div>
<svg style="position:absolute;left:966px;top:529px" width="10" height="7"><polyline points="1,5.5 5,1.5 9,5.5" fill="none" stroke="#b0b0b0" stroke-width="1.2"/></svg>
<svg style="position:absolute;left:966px;top:688px" width="10" height="7"><polyline points="1,1.5 5,5.5 9,1.5" fill="none" stroke="#b0b0b0" stroke-width="1.2"/></svg>
<div style="position:absolute;left:681px;top:107px;width:305px;height:190px;border:1px solid #7378a8;border-radius:6px;background:#f0f0f1;box-shadow:0 0 0 1px #fbfbff;"></div>
<div style="position:absolute;left:681px;top:107px;width:307px;height:26px;background:#5e77d6;border-radius:6px 6px 0 0;"></div>
<div style="position:absolute;left:687.7px;top:112.50px;font-size:13px;line-height:16px;color:#fff;font-weight:bold;white-space:nowrap;transform:scaleX(0.9589);transform-origin:left top;">Assignments</div>
<div style="position:absolute;left:687.5px;top:138.69px;font-size:11px;line-height:13px;color:#000;font-weight:normal;white-space:nowrap;transform:scaleX(0.9847);transform-origin:left top;">Intake Service</div>
<div style="position:absolute;left:687.5px;top:166.69px;font-size:11px;line-height:13px;color:#000;font-weight:normal;white-space:nowrap;transform:scaleX(1.0497);transform-origin:left top;">Intake Clinician</div>
<div style="position:absolute;left:687.5px;top:193.19px;font-size:11px;line-height:13px;color:#000;font-weight:normal;white-space:nowrap;transform:scaleX(1.0752);transform-origin:left top;">Follow-up Clinician</div>
<div style="position:absolute;left:687.5px;top:220.19px;font-size:11px;line-height:13px;color:#000;font-weight:normal;white-space:nowrap;transform:scaleX(1.0719);transform-origin:left top;">Intake Disposition</div>
<div style="position:absolute;left:687.5px;top:246.69px;font-size:11px;line-height:13px;color:#000;font-weight:bold;white-space:nowrap;transform:scaleX(0.9557);transform-origin:left top;">Primary POS *</div>
<div style="position:absolute;left:687.5px;top:273.19px;font-size:11px;line-height:13px;color:#000;font-weight:normal;white-space:nowrap;transform:scaleX(0.9966);transform-origin:left top;">Diagnosis Type</div>
<div style="position:absolute;left:806px;top:136px;width:177px;height:20px;box-sizing:border-box;background:#e3e3e3;border:1px solid #b6b6b6;"></div>
<svg style="position:absolute;left:969.0px;top:142.5px" width="10" height="7"><polyline points="1,1.5 5.0,5.5 9,1.5" fill="none" stroke="#404040" stroke-width="1.1"/></svg>
<div style="position:absolute;left:806px;top:163px;width:153px;height:21px;box-sizing:border-box;background:#e3e3e3;border:1px solid #b6b6b6;"></div>
<svg style="position:absolute;left:945.0px;top:170.0px" width="10" height="7"><polyline points="1,1.5 5.0,5.5 9,1.5" fill="none" stroke="#404040" stroke-width="1.1"/></svg>
<div style="position:absolute;left:806px;top:190px;width:153px;height:21px;box-sizing:border-box;background:#e3e3e3;border:1px solid #b6b6b6;"></div>
<svg style="position:absolute;left:945.0px;top:197.0px" width="10" height="7"><polyline points="1,1.5 5.0,5.5 9,1.5" fill="none" stroke="#404040" stroke-width="1.1"/></svg>
<div style="position:absolute;left:806px;top:217px;width:177px;height:21px;box-sizing:border-box;background:#e3e3e3;border:1px solid #b6b6b6;"></div>
<svg style="position:absolute;left:969.0px;top:224.0px" width="10" height="7"><polyline points="1,1.5 5.0,5.5 9,1.5" fill="none" stroke="#404040" stroke-width="1.1"/></svg>
<div style="position:absolute;left:806px;top:243px;width:177px;height:21px;box-sizing:border-box;background:#e3e3e3;border:1px solid #b6b6b6;"></div>
<svg style="position:absolute;left:969.0px;top:250.0px" width="10" height="7"><polyline points="1,1.5 5.0,5.5 9,1.5" fill="none" stroke="#404040" stroke-width="1.1"/></svg>
<div style="position:absolute;left:810.7px;top:247.69px;font-size:11px;line-height:13px;color:#000;font-weight:normal;white-space:nowrap;transform:scaleX(1.0803);transform-origin:left top;">Building 50</div>
<div style="position:absolute;left:806px;top:270px;width:177px;height:21px;box-sizing:border-box;background:#e3e3e3;border:1px solid #b6b6b6;"></div>
<svg style="position:absolute;left:969.0px;top:277.0px" width="10" height="7"><polyline points="1,1.5 5.0,5.5 9,1.5" fill="none" stroke="#404040" stroke-width="1.1"/></svg>
<div style="position:absolute;left:960px;top:164px;width:22px;height:17px;box-sizing:border-box;border:1px solid #8aa2c6;border-radius:3px;background:linear-gradient(#eaf3fc,#d6e6f6);"></div>
<svg style="position:absolute;left:963px;top:165px" width="17" height="16" viewBox="0 0 17 16"><rect x="0.7" y="1.7" width="15" height="10.5" fill="#dcecf8" stroke="#3c4c64" stroke-width="1.4"/><path d="M1,2 L8,8 L15,2" fill="none" stroke="#a9bccf" stroke-width="0.9"/><path d="M6.5,8.5 H10.5 V6 L15.5,10 L10.5,14.5 V12 H6.5 Z" fill="#72bb5e" stroke="#2f6a2a" stroke-width="0.9"/></svg>
<div style="position:absolute;left:960px;top:190px;width:22px;height:17px;box-sizing:border-box;border:1px solid #8aa2c6;border-radius:3px;background:linear-gradient(#eaf3fc,#d6e6f6);"></div>
<svg style="position:absolute;left:963px;top:191px" width="17" height="16" viewBox="0 0 17 16"><rect x="0.7" y="1.7" width="15" height="10.5" fill="#dcecf8" stroke="#3c4c64" stroke-width="1.4"/><path d="M1,2 L8,8 L15,2" fill="none" stroke="#a9bccf" stroke-width="0.9"/><path d="M6.5,8.5 H10.5 V6 L15.5,10 L10.5,14.5 V12 H6.5 Z" fill="#72bb5e" stroke="#2f6a2a" stroke-width="0.9"/></svg>
<div style="position:absolute;left:681px;top:312px;width:305px;height:165px;border:1px solid #7378a8;border-radius:6px;background:#f0f0f1;box-shadow:0 0 0 1px #fbfbff;"></div>
<div style="position:absolute;left:681px;top:312px;width:307px;height:26px;background:#5e77d6;border-radius:6px 6px 0 0;"></div>
<div style="position:absolute;left:687.3px;top:317.50px;font-size:13px;line-height:16px;color:#fff;font-weight:bold;white-space:nowrap;transform:scaleX(0.9760);transform-origin:left top;">Miscellaneous</div>
<div style="position:absolute;left:687.3px;top:343.19px;font-size:11px;line-height:13px;color:#c62828;font-weight:bold;white-space:nowrap;transform:scaleX(0.9804);transform-origin:left top;">Client ID *</div>
<div style="position:absolute;left:687.3px;top:366.19px;font-size:11px;line-height:13px;color:#000;font-weight:normal;white-space:nowrap;transform:scaleX(1.0811);transform-origin:left top;">Additional ID #</div>
<div style="position:absolute;left:687.3px;top:389.19px;font-size:11px;line-height:13px;color:#000;font-weight:normal;white-space:nowrap;transform:scaleX(0.9843);transform-origin:left top;">Family ID #</div>
<div style="position:absolute;left:687.3px;top:411.19px;font-size:11px;line-height:13px;color:#000;font-weight:normal;white-space:nowrap;transform:scaleX(1.0088);transform-origin:left top;">Case Worker</div>
<div style="position:absolute;left:687.3px;top:429.19px;font-size:11px;line-height:13px;color:#000;font-weight:normal;white-space:nowrap;transform:scaleX(1.0503);transform-origin:left top;">Med-Assist. Opioid</div>
<div style="position:absolute;left:687.3px;top:441.69px;font-size:11px;line-height:13px;color:#000;font-weight:normal;white-space:nowrap;transform:scaleX(0.9917);transform-origin:left top;">Therapy</div>
<div style="position:absolute;left:687.3px;top:457.19px;font-size:11px;line-height:13px;color:#000;font-weight:normal;white-space:nowrap;transform:scaleX(1.0103);transform-origin:left top;">Client Characteristics</div>
<div style="position:absolute;left:818px;top:341px;width:145px;height:19px;box-sizing:border-box;background:#d3d3d3;border:1px solid #9a9a9a;"></div>
<svg style="position:absolute;left:969px;top:342px" width="11" height="16" viewBox="0 0 11 16"><rect x="0.5" y="0.5" width="10" height="15" rx="1.5" fill="#fafafa" stroke="#707070"/><rect x="2.5" y="2.5" width="6" height="3" fill="#9a9a9a"/><rect x="2.5" y="8" width="2" height="2" fill="#555"/><rect x="6.5" y="8" width="2" height="2" fill="#555"/><rect x="2.5" y="11.5" width="2" height="2" fill="#555"/><rect x="6.5" y="11.5" width="2" height="2" fill="#555"/></svg>
<div style="position:absolute;left:818px;top:363px;width:166px;height:19px;box-sizing:border-box;background:#fff;border:1px solid #7a7a7a;"></div>
<div style="position:absolute;left:818px;top:386px;width:106px;height:19px;box-sizing:border-box;background:#fff;border:1px solid #7a7a7a;"></div>
<svg style="position:absolute;left:929px;top:388px" width="11" height="16" viewBox="0 0 11 16"><rect x="0.5" y="0.5" width="10" height="15" rx="1.5" fill="#fafafa" stroke="#707070"/><rect x="2.5" y="2.5" width="6" height="3" fill="#9a9a9a"/><rect x="2.5" y="8" width="2" height="2" fill="#555"/><rect x="6.5" y="8" width="2" height="2" fill="#555"/><rect x="2.5" y="11.5" width="2" height="2" fill="#555"/><rect x="6.5" y="11.5" width="2" height="2" fill="#555"/></svg>
<div style="position:absolute;left:944px;top:386px;width:19px;height:19px;box-sizing:border-box;border:1px solid #b5cce6;border-radius:3px;background:#dbe8f6;"></div>
<svg style="position:absolute;left:946px;top:390px" width="16" height="12" viewBox="0 0 16 12"><rect x="2" y="1" width="5" height="6" rx="2" fill="#3a4450"/><rect x="9" y="1" width="5" height="6" rx="2" fill="#3a4450"/><rect x="5" y="3" width="6" height="5" fill="#3a4450"/><circle cx="4" cy="8" r="3.8" fill="#3a4450"/><circle cx="12" cy="8" r="3.8" fill="#3a4450"/><circle cx="4" cy="8.4" r="2.3" fill="#6f9cc6"/><circle cx="12" cy="8.4" r="2.3" fill="#6f9cc6"/><circle cx="8" cy="5" r="1" fill="#1d242c"/></svg>
<div style="position:absolute;left:964px;top:386px;width:19px;height:19px;box-sizing:border-box;border:1px solid #b5cce6;border-radius:3px;background:#dbe8f6;"></div>
<svg style="position:absolute;left:966px;top:388px" width="16" height="16" viewBox="0 0 16 16"><circle cx="10" cy="4" r="3" fill="#e9b27a"/><rect x="6" y="7" width="8" height="7" fill="#6bb04a"/><circle cx="5" cy="8" r="2.5" fill="#d99a64"/><rect x="1" y="10.5" width="8" height="4" fill="#c46a3a"/><rect x="2" y="12" width="12" height="3" fill="#5d88b5"/></svg>
<div style="position:absolute;left:818px;top:408px;width:166px;height:19px;box-sizing:border-box;background:#fff;border:1px solid #7a7a7a;"></div>
<div style="position:absolute;left:818px;top:430px;width:166px;height:20px;box-sizing:border-box;background:#e3e3e3;border:1px solid #b6b6b6;"></div>
<svg style="position:absolute;left:970.0px;top:436.5px" width="10" height="7"><polyline points="1,1.5 5.0,5.5 9,1.5" fill="none" stroke="#404040" stroke-width="1.1"/></svg>
<div style="position:absolute;left:818px;top:453px;width:166px;height:21px;box-sizing:border-box;background:#e3e3e3;border:1px solid #b6b6b6;"></div>
<svg style="position:absolute;left:970.0px;top:460.0px" width="10" height="7"><polyline points="1,1.5 5.0,5.5 9,1.5" fill="none" stroke="#404040" stroke-width="1.1"/></svg>
<div style="position:absolute;left:998px;top:102px;width:265px;height:611px;border:1px solid #7d86a8;border-radius:6px;background:#f2f3f7;box-shadow:inset 0 0 0 1px #e4ecf8;"></div>
<div style="position:absolute;left:1003px;top:106px;width:255px;height:143px;border:1px solid #7378a8;border-radius:6px;background:#f0f0f1;box-shadow:0 0 0 1px #fbfbff;"></div>
<div style="position:absolute;left:1003px;top:106px;width:257px;height:26px;background:#5e77d6;border-radius:6px 6px 0 0;"></div>
<div style="position:absolute;left:1009.5px;top:112.00px;font-size:13px;line-height:16px;color:#fff;font-weight:bold;white-space:nowrap;transform:scaleX(0.9834);transform-origin:left top;">Basic Information</div>
<div style="position:absolute;left:1006px;top:136px;width:80px;height:90px;box-sizing:border-box;border-top:2px solid #7a7a7a;border-left:2px solid #7a7a7a;border-right:1px solid #fafafa;border-bottom:1px solid #fafafa;background:#efefef;"></div>
<div style="position:absolute;left:893px;width:300px;text-align:center;top:148.69px;font-size:11px;line-height:13px;color:#000;font-weight:normal;white-space:nowrap;transform:scaleX(1.1353);transform-origin:center top;">No</div>
<div style="position:absolute;left:893px;width:300px;text-align:center;top:161.69px;font-size:11px;line-height:13px;color:#000;font-weight:normal;white-space:nowrap;transform:scaleX(1.0396);transform-origin:center top;">Photo</div>
<div style="position:absolute;left:893px;width:300px;text-align:center;top:174.69px;font-size:11px;line-height:13px;color:#000;font-weight:normal;white-space:nowrap;transform:scaleX(1.0234);transform-origin:center top;">Available</div>
<div style="position:absolute;left:1008px;top:229px;width:77px;height:20px;box-sizing:border-box;border:1px solid #8ea4c4;border-radius:3px;background:linear-gradient(#eef5fd,#c9daf0);"></div>
<div style="position:absolute;left:1037.2px;top:231.02px;font-size:11.5px;line-height:14px;color:#000;font-weight:normal;white-space:nowrap;transform:scaleX(0.8982);transform-origin:left top;">Add</div>
<div style="position:absolute;left:1090px;top:135px;width:166px;height:104px;box-sizing:border-box;background:#fff;border:1px solid #7a7a7a;"></div>
<div style="position:absolute;left:1239px;top:137px;width:16px;height:101px;background:#f0f0f0;"></div>
<svg style="position:absolute;left:1242px;top:143px" width="10" height="7"><polyline points="1,5.5 5,1.5 9,5.5" fill="none" stroke="#b0b0b0" stroke-width="1.2"/></svg>
<svg style="position:absolute;left:1242px;top:225px" width="10" height="7"><polyline points="1,1.5 5,5.5 9,1.5" fill="none" stroke="#b0b0b0" stroke-width="1.2"/></svg>
<div style="position:absolute;left:1003px;top:255px;width:255px;height:304px;border:1px solid #7378a8;border-radius:6px;background:#f0f0f1;box-shadow:0 0 0 1px #fbfbff;"></div>
<div style="position:absolute;left:1003px;top:255px;width:257px;height:26px;background:#5e77d6;border-radius:6px 6px 0 0;"></div>
<div style="position:absolute;left:1009.6px;top:259.00px;font-size:13px;line-height:16px;color:#fff;font-weight:bold;white-space:nowrap;transform:scaleX(0.9790);transform-origin:left top;">Click Refresh to Load Data</div>
<div style="position:absolute;left:1178px;top:256px;width:17px;height:18px;box-sizing:border-box;border:1px solid #c3d3ee;border-radius:3px;background:#dfe8f7;"></div>
<div style="position:absolute;left:1198px;top:256px;width:17px;height:18px;box-sizing:border-box;border:1px solid #c3d3ee;border-radius:3px;background:#dfe8f7;"></div>
<div style="position:absolute;left:1218px;top:256px;width:17px;height:18px;box-sizing:border-box;border:1px solid #c3d3ee;border-radius:3px;background:#dfe8f7;"></div>
<div style="position:absolute;left:1238px;top:256px;width:17px;height:18px;box-sizing:border-box;border:1px solid #c3d3ee;border-radius:3px;background:#dfe8f7;"></div>
<svg style="position:absolute;left:1180px;top:258px" width="13" height="13" viewBox="0 0 13 13"><rect x="0.5" y="0.5" width="12" height="12" fill="#fff" stroke="#4a6fa8"/><rect x="1" y="1" width="11" height="2.5" fill="#ec9a4a"/><rect x="1" y="4" width="11" height="1.5" fill="#c9c9c9"/><rect x="2" y="6.5" width="3.5" height="2" fill="#4aa04a"/><rect x="7" y="6.5" width="3.5" height="2" fill="#4aa04a"/><rect x="2" y="9.5" width="3.5" height="2" fill="#8fcf8f"/></svg>
<svg style="position:absolute;left:1199px;top:258px" width="15" height="13" viewBox="0 0 15 13"><rect x="0.5" y="0.5" width="14" height="12" fill="#f2f2f2" stroke="#8a8a8a"/><rect x="1" y="1" width="13" height="2" fill="#a8a8a8"/><path d="M2,5.5 H3 M2,8 H3 M2,10.5 H3" stroke="#777"/><path d="M4.5,5.5 H13 M4.5,8 H13 M4.5,10.5 H13" stroke="#9a9a9a"/></svg>
<svg style="position:absolute;left:1219px;top:259px" width="16" height="12" viewBox="0 0 16 12"><rect x="2" y="1" width="5" height="6" rx="2" fill="#888888"/><rect x="9" y="1" width="5" height="6" rx="2" fill="#888888"/><rect x="5" y="3" width="6" height="5" fill="#888888"/><circle cx="4" cy="8" r="3.8" fill="#888888"/><circle cx="12" cy="8" r="3.8" fill="#888888"/><circle cx="4" cy="8.4" r="2.3" fill="#9c9c9c"/><circle cx="12" cy="8.4" r="2.3" fill="#9c9c9c"/><circle cx="8" cy="5" r="1" fill="#6a6a6a"/></svg>
<svg style="position:absolute;left:1240px;top:258px" width="14" height="14" viewBox="0 0 14 14"><path d="M10,3 A5,5 0 0 0 2,7" fill="none" stroke="#8a8a8a" stroke-width="2"/><path d="M3,10 A5,5 0 0 0 11,6" fill="none" stroke="#8a8a8a" stroke-width="2"/><polygon points="9,0 13,3 9,5" fill="#8a8a8a"/><polygon points="4,8 0,10 4,13" fill="#8a8a8a"/></svg>
<div style="position:absolute;left:1007px;top:284px;width:249px;height:272px;box-sizing:border-box;background:#fff;border:1px solid #828282;"></div>
<div style="position:absolute;left:1054px;top:287px;width:1px;height:24px;background:#e6e6e6;"></div>
<div style="position:absolute;left:1100px;top:287px;width:1px;height:24px;background:#e6e6e6;"></div>
<div style="position:absolute;left:1146px;top:287px;width:1px;height:24px;background:#e6e6e6;"></div>
<div style="position:absolute;left:1192px;top:287px;width:1px;height:24px;background:#e6e6e6;"></div>
<div style="position:absolute;left:1238px;top:287px;width:1px;height:24px;background:#e6e6e6;"></div>
<div style="position:absolute;left:1015.6px;top:291.69px;font-size:11px;line-height:13px;color:#000;font-weight:normal;white-space:nowrap;transform:scaleX(0.9243);transform-origin:left top;">Date</div>
<div style="position:absolute;left:1061.2px;top:291.69px;font-size:11px;line-height:13px;color:#000;font-weight:normal;white-space:nowrap;transform:scaleX(0.9320);transform-origin:left top;">Start ...</div>
<div style="position:absolute;left:1107.3px;top:291.69px;font-size:11px;line-height:13px;color:#000;font-weight:normal;white-space:nowrap;transform:scaleX(0.9481);transform-origin:left top;">End ...</div>
<div style="position:absolute;left:1153.5px;top:291.69px;font-size:11px;line-height:13px;color:#000;font-weight:normal;white-space:nowrap;transform:scaleX(0.9340);transform-origin:left top;">Desc...</div>
<div style="position:absolute;left:1199.9px;top:291.69px;font-size:11px;line-height:13px;color:#000;font-weight:normal;white-space:nowrap;transform:scaleX(0.9545);transform-origin:left top;">Link...</div>
<div style="position:absolute;left:1008px;top:537px;width:247px;height:18px;background:repeating-conic-gradient(#e6e6e6 0% 25%, #fafafa 0% 50%) 0 0/2px 2px;"></div>
<div style="position:absolute;left:1009px;top:537px;width:17px;height:18px;box-sizing:border-box;background:#f0f0f0;border-right:1px solid #a0a0a0;border-bottom:1px solid #a0a0a0;border-top:1px solid #fff;border-left:1px solid #fff;"></div>
<svg style="position:absolute;left:1014px;top:542px" width="6" height="9"><polygon points="5,0 0,4.5 5,9" fill="#000"/></svg>
<div style="position:absolute;left:1026px;top:537px;width:149px;height:18px;box-sizing:border-box;background:#f0f0f0;border-right:1px solid #888;border-bottom:1px solid #888;border-top:1px solid #fff;border-left:1px solid #fff;"></div>
<div style="position:absolute;left:1237px;top:537px;width:17px;height:18px;box-sizing:border-box;background:#f0f0f0;border-right:1px solid #a0a0a0;border-bottom:1px solid #a0a0a0;border-top:1px solid #fff;border-left:1px solid #fff;"></div>
<svg style="position:absolute;left:1243px;top:542px" width="6" height="9"><polygon points="0,0 5,4.5 0,9" fill="#000"/></svg>
<div style="position:absolute;left:1005px;top:566px;width:126px;height:28px;box-sizing:border-box;border:1px solid #7f8a9e;border-radius:2px;background:linear-gradient(#e6eefa 0%,#d2e0f3 30%,#c6d7ee 55%,#d8e5f6 100%);"></div>
<div style="position:absolute;left:1023.4px;top:573.02px;font-size:11.5px;line-height:14px;color:#000;font-weight:normal;white-space:nowrap;transform:scaleX(0.9534);transform-origin:left top;">Staff Assignments</div>
<div style="position:absolute;left:1132px;top:566px;width:126px;height:28px;box-sizing:border-box;border:1px solid #7f8a9e;border-radius:2px;background:linear-gradient(#e6eefa 0%,#d2e0f3 30%,#c6d7ee 55%,#d8e5f6 100%);"></div>
<div style="position:absolute;left:1155.2px;top:573.02px;font-size:11.5px;line-height:14px;color:#000;font-weight:normal;white-space:nowrap;transform:scaleX(0.9537);transform-origin:left top;">Insurance Auths</div>
<div style="position:absolute;left:1005px;top:598px;width:126px;height:28px;box-sizing:border-box;border:1px solid #7f8a9e;border-radius:2px;background:linear-gradient(#e6eefa 0%,#d2e0f3 30%,#c6d7ee 55%,#d8e5f6 100%);"></div>
<div style="position:absolute;left:1013.2px;top:605.02px;font-size:11.5px;line-height:14px;color:#000;font-weight:normal;white-space:nowrap;transform:scaleX(0.9601);transform-origin:left top;">Program Assignments</div>
<div style="position:absolute;left:1132px;top:598px;width:126px;height:28px;box-sizing:border-box;border:1px solid #7f8a9e;border-radius:2px;background:linear-gradient(#e6eefa 0%,#d2e0f3 30%,#c6d7ee 55%,#d8e5f6 100%);"></div>
<div style="position:absolute;left:1147.3px;top:605.02px;font-size:11.5px;line-height:14px;color:#000;font-weight:normal;white-space:nowrap;transform:scaleX(0.9605);transform-origin:left top;">Scheduling Groups</div>
<div style="position:absolute;left:1005px;top:632px;width:126px;height:28px;box-sizing:border-box;border:1px solid #7f8a9e;border-radius:2px;background:linear-gradient(#e6eefa 0%,#d2e0f3 30%,#c6d7ee 55%,#d8e5f6 100%);"></div>
<div style="position:absolute;left:1014.5px;top:639.02px;font-size:11.5px;line-height:14px;color:#000;font-weight:normal;white-space:nowrap;transform:scaleX(0.9576);transform-origin:left top;">Patient Portal Account</div>
<div style="position:absolute;left:1132px;top:632px;width:126px;height:28px;box-sizing:border-box;border:1px solid #7f8a9e;border-radius:2px;background:linear-gradient(#e6eefa 0%,#d2e0f3 30%,#c6d7ee 55%,#d8e5f6 100%);"></div>
<div style="position:absolute;left:1136.5px;top:639.02px;font-size:11.5px;line-height:14px;color:#000;font-weight:normal;white-space:nowrap;transform:scaleX(0.9566);transform-origin:left top;">Foster Home Placement</div>
<div style="position:absolute;left:1003px;top:669px;width:52px;height:40px;box-sizing:border-box;border:1px solid #7f8a9e;border-radius:2px;background:linear-gradient(#e6eefa 0%,#d2e0f3 30%,#c6d7ee 55%,#d8e5f6 100%);"></div>
<div style="position:absolute;left:1077px;top:669px;width:52px;height:40px;box-sizing:border-box;border:1px solid #7f8a9e;border-radius:2px;background:linear-gradient(#e6eefa 0%,#d2e0f3 30%,#c6d7ee 55%,#d8e5f6 100%);"></div>
<div style="position:absolute;left:1133px;top:669px;width:52px;height:40px;box-sizing:border-box;border:1px solid #7f8a9e;border-radius:2px;background:linear-gradient(#e6eefa 0%,#d2e0f3 30%,#c6d7ee 55%,#d8e5f6 100%);"></div>
<div style="position:absolute;left:1205px;top:668px;width:52px;height:41px;box-sizing:border-box;border:1px solid #7f8a9e;border-radius:2px;background:linear-gradient(#e6eefa 0%,#d2e0f3 30%,#c6d7ee 55%,#d8e5f6 100%);"></div>
<svg style="position:absolute;left:1021px;top:680px" width="16" height="17" viewBox="0 0 16 17"><path d="M6.5,1.5 H12.5 L15.5,4.5 V13 H6.5 Z" fill="#e4f1fb" stroke="#5d6b7d"/><path d="M12.5,1.5 V4.5 H15.5" fill="none" stroke="#5d6b7d"/><path d="M0.5,7 H4 L5,6 H7 V7.5 H13.5 V16 H0.5 Z" fill="#f7e19a" stroke="#9f7d3e"/><rect x="1.5" y="10" width="11" height="5" fill="#f2d36e"/></svg>
<svg style="position:absolute;left:1096px;top:680px" width="16" height="17" viewBox="0 0 16 17"><rect x="8.5" y="1" width="4" height="5" fill="#b8c4bc" stroke="#5a6a60"/><path d="M0.5,5.5 H5 L6,7 H13.5 V16 H0.5 Z" fill="#e9c565" stroke="#4a4030"/><path d="M1.5,9 H14.5 L13,15.5 H1.5 Z" fill="#f5d27a"/></svg>
<svg style="position:absolute;left:1151px;top:680px" width="16" height="17" viewBox="0 0 16 17"><path d="M4.5,1 L6.5,2.5 L8,0.8 L9.5,2.5 L11.5,1 L10.5,5.5 H5.5 Z" fill="#106a20"/><path d="M5.5,6 H10.5 C15,7 16,16 8,16.5 C0,16 1,7 5.5,6 Z" fill="#0f8a22"/><text x="8" y="14" font-size="8.5" font-weight="bold" fill="#8ee08e" text-anchor="middle" font-family="Liberation Sans">$</text></svg>
<svg style="position:absolute;left:1223px;top:680px" width="16" height="16" viewBox="0 0 16 16"><polygon points="0.57,0.57 3.29,1.24 6.89,4.84 4.84,6.89 1.24,3.29" fill="#e6f4f0" stroke="#3d5a52" stroke-width="1" stroke-linejoin="round"/><polygon points="15.43,0.57 12.71,1.24 9.11,4.84 11.16,6.89 14.76,3.29" fill="#3a9a55" stroke="#1f6a3a" stroke-width="1" stroke-linejoin="round"/><polygon points="0.57,15.43 3.29,14.76 6.89,11.16 4.84,9.11 1.24,12.71" fill="#33504a" stroke="#2a403a" stroke-width="1" stroke-linejoin="round"/><polygon points="15.43,15.43 12.71,14.76 9.11,11.16 11.16,9.11 14.76,12.71" fill="#1d5a3e" stroke="#184a34" stroke-width="1" stroke-linejoin="round"/></svg>
<div style="position:absolute;left:0px;top:716px;width:1267px;height:25px;background:#f0f0f0;"></div>
<div style="position:absolute;left:1px;top:718px;width:598px;height:22px;box-sizing:border-box;border-top:2px solid #808080;border-left:2px solid #808080;border-bottom:1px solid #fff;border-right:1px solid #fff;"></div>
<div style="position:absolute;left:601px;top:718px;width:398px;height:22px;box-sizing:border-box;border-top:2px solid #808080;border-left:2px solid #808080;border-bottom:1px solid #fff;border-right:1px solid #fff;"></div>
<div style="position:absolute;left:0px;top:741px;width:1269px;height:1px;background:#6e6e6e;"></div>
<div style="position:absolute;left:0px;top:742px;width:1269px;height:1px;background:#d8d8d8;"></div>
</body></html>
